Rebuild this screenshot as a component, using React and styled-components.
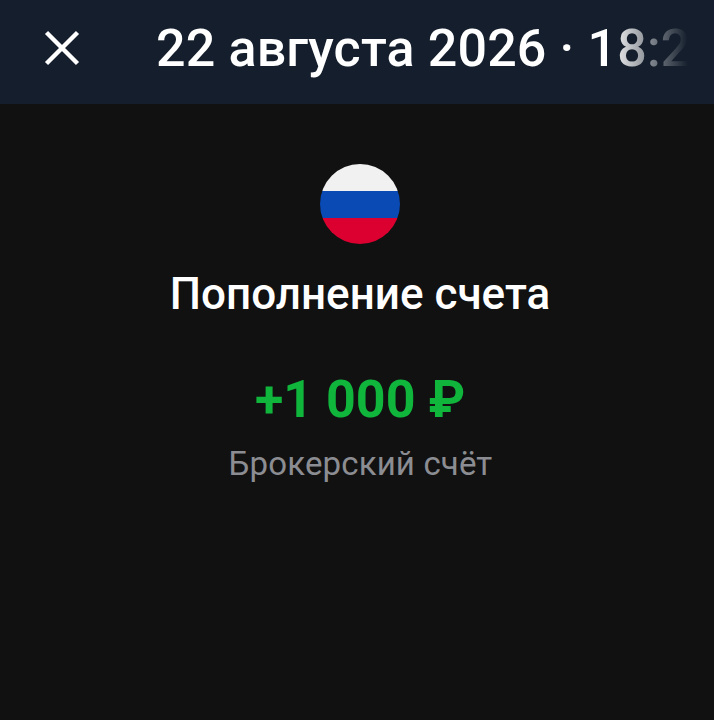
import React from "react"
import styled, { createGlobalStyle } from "styled-components"

const Global = createGlobalStyle`
  html, body {
    margin: 0;
    padding: 0;
    background: #111111;
    font-family: Roboto, "Noto Sans", sans-serif;
  }
`

const Page = styled.div`
  width: 714px;
  height: 720px;
  overflow: hidden;
  background: #111111;
  display: flex;
  flex-direction: column;
`

const Toolbar = styled.header`
  height: 104px;
  box-sizing: border-box;
  flex: none;
  background: #141e2c;
  display: flex;
  align-items: center;
  padding: 0 0 8px 44px;
`

const CloseButton = styled.button`
  width: 36px;
  height: 36px;
  padding: 0;
  border: 0;
  background: none;
  display: flex;
  flex: none;
`

const TitleClip = styled.div`
  margin: 2px 0 0 76px;
  width: 532px;
  overflow: hidden;
  white-space: nowrap;
  font-size: 52px;
  font-weight: 500;
  letter-spacing: 0.15px;
  line-height: 60px;
  color: #ffffff;
  mask-image: linear-gradient(to right, #000 85%, transparent 100%);
`

const Content = styled.main`
  display: flex;
  flex-direction: column;
  align-items: center;
  padding: 60px 0 0 6px;
`

const Flag = styled.svg`
  display: block;
  width: 80px;
  height: 80px;
`

const Heading = styled.h1`
  margin: 24px 0 0;
  font-size: 44px;
  font-weight: 500;
  line-height: 52px;
  color: #ffffff;
`

const Amount = styled.div`
  margin-top: 52px;
  font-size: 52px;
  font-weight: 700;
  line-height: 56px;
  color: #10b53c;
`

const Account = styled.div`
  margin: 16px 0 0 1px;
  font-size: 33px;
  letter-spacing: 0.15px;
  line-height: 40px;
  color: #8b8d92;
`

const CloseIcon = () => (
  <svg width="36" height="36" viewBox="0 0 36 36" fill="none">
    <path d="M2.5 2.5L33.5 33.5M33.5 2.5L2.5 33.5" stroke="#fff" strokeWidth="4.4" />
  </svg>
)

const RussiaFlag = () => (
  <Flag viewBox="0 0 80 80">
    <clipPath id="round">
      <circle cx="40" cy="40" r="40" />
    </clipPath>
    <g clipPath="url(#round)">
      <rect width="80" height="27" fill="#f1f1f1" />
      <rect y="27" width="80" height="27" fill="#0a4ab4" />
      <rect y="54" width="80" height="26" fill="#dc0030" />
    </g>
  </Flag>
)

const App = () => (
  <Page>
    <Global />
    <Toolbar>
      <CloseButton aria-label="Закрыть">
        <CloseIcon />
      </CloseButton>
      <TitleClip>22 августа 2026 · 18:25</TitleClip>
    </Toolbar>
    <Content>
      <RussiaFlag />
      <Heading>Пополнение счета</Heading>
      <Amount>+1 000 ₽</Amount>
      <Account>Брокерский счёт</Account>
    </Content>
  </Page>
)

export default App
